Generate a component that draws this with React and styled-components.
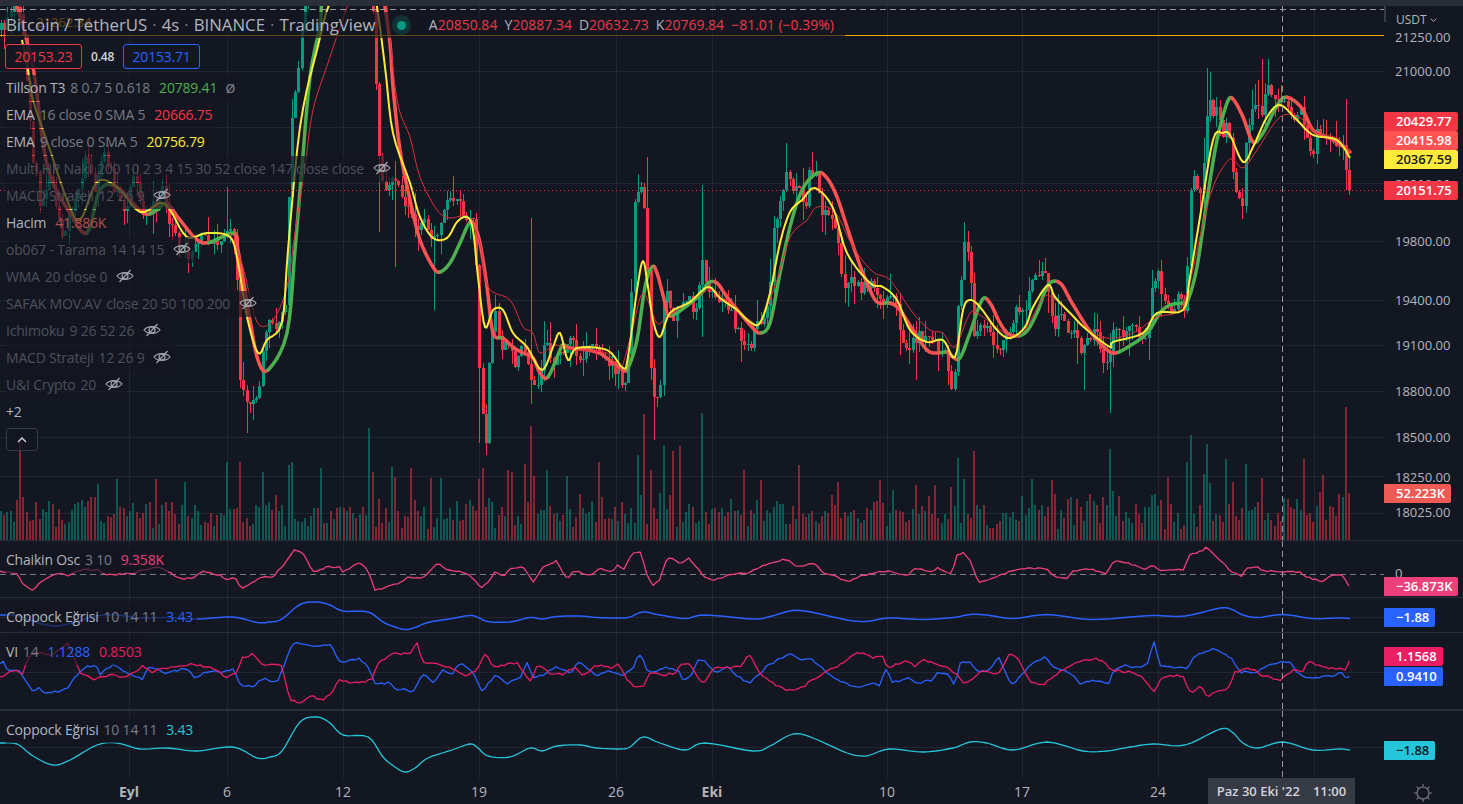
import React from 'react'
import styled, { createGlobalStyle } from 'styled-components'

const GlobalStyle = createGlobalStyle`
  html, body { margin: 0; padding: 0; background: #131722; overflow: hidden; }
  body { font-family: 'Open Sans', 'Noto Sans', sans-serif; }
`

const PLOT_W = 1384
const CROSS_X = 1282
const STEP = 3.233
const V_GRID = [129, 227, 343, 479, 616, 712, 887, 1022, 1158, 1314]
const TIME_LABELS = [
  ['Eyl', 129, true], ['6', 227], ['12', 343], ['19', 479], ['26', 616],
  ['Eki', 712, true], ['10', 887], ['17', 1022], ['24', 1158],
]

// closes read off the chart, page pixels
const CLOSES = [[0,30],[15,10],[22,20],[28,100],[33,160],[40,200],[50,180],[62,230],[72,215],[85,160],[95,190],[105,150],[115,190],[125,210],[135,175],[145,215],[155,205],[163,190],[170,225],[180,245],[190,255],[200,235],[215,245],[232,232],[236,250],[240,385],[247,400],[255,395],[260,385],[264,345],[270,320],[278,325],[285,310],[288,220],[292,120],[298,70],[302,30],[308,-20],[370,-20],[374,30],[376,90],[380,170],[385,190],[392,180],[400,195],[408,210],[415,225],[425,220],[432,245],[438,235],[446,205],[452,195],[460,205],[466,225],[472,210],[476,270],[480,395],[486,440],[490,345],[495,305],[500,345],[510,345],[515,365],[522,345],[530,375],[538,385],[545,340],[552,365],[560,355],[570,335],[578,365],[590,345],[600,355],[610,360],[618,375],[626,390],[630,330],[634,200],[642,180],[646,230],[649,345],[655,400],[660,390],[664,300],[669,290],[672,325],[680,305],[688,300],[695,315],[703,250],[707,290],[716,300],[725,305],[733,320],[742,340],[750,345],[756,325],[765,320],[770,280],[775,220],[782,195],[788,165],[793,185],[798,180],[805,210],[810,165],[818,185],[822,215],[830,215],[836,225],[841,275],[846,290],[852,280],[860,290],[870,285],[880,300],[888,295],[895,305],[905,350],[912,345],[920,335],[932,345],[945,350],[952,395],[956,370],[958,310],[964,240],[970,265],[974,330],[982,320],[990,335],[1000,350],[1005,340],[1012,325],[1017,300],[1023,320],[1029,290],[1036,278],[1044,265],[1050,300],[1055,325],[1060,315],[1068,330],[1075,330],[1082,352],[1090,340],[1095,330],[1100,350],[1108,368],[1112,335],[1120,335],[1130,325],[1140,335],[1147,335],[1152,290],[1158,275],[1162,300],[1170,310],[1178,295],[1184,315],[1188,250],[1192,175],[1197,190],[1201,200],[1204,165],[1208,95],[1213,120],[1218,105],[1223,135],[1228,125],[1232,170],[1238,195],[1242,200],[1246,145],[1252,115],[1258,105],[1263,115],[1267,85],[1272,100],[1278,95],[1284,100],[1290,120],[1295,120],[1302,110],[1305,130],[1312,155],[1318,130],[1322,140],[1330,145],[1337,140],[1342,140],[1347,175],[1349,190]]

const LONG_WICKS = [[247,433],[480,443],[378,232],[395,267],[433,310],[532,218],[655,440],[702,185],[702,337],[647,157],[786,143],[953,440],[1110,413],[1347,99],[1262,59],[1207,68],[1210,72],[1246,212],[227,187],[304,6],[548,330],[965,222],[970,300],[1046,258],[885,378],[915,380],[1085,390]]

const VOL_PEAKS = [[21,440],[80,486],[98,484],[118,479],[155,479],[185,482],[228,462],[240,462],[264,472],[288,465],[293,462],[300,472],[320,468],[370,428],[374,472],[391,467],[395,477],[410,468],[430,478],[440,478],[478,479],[484,468],[507,470],[512,472],[526,464],[530,426],[533,476],[546,470],[566,476],[600,462],[638,455],[645,414],[652,470],[662,447],[665,445],[672,451],[680,446],[702,413],[745,470],[760,480],[800,465],[838,482],[856,483],[880,480],[915,485],[935,485],[951,487],[957,458],[964,479],[974,451],[1032,479],[1051,480],[1071,497],[1090,494],[1110,449],[1113,491],[1168,477],[1187,462],[1190,435],[1203,474],[1207,444],[1210,483],[1226,459],[1233,482],[1245,464],[1262,478],[1299,490],[1303,459],[1320,492],[1323,475],[1343,497],[1346,407],[1349,493]]

const T3 = [[17,6],[33,67],[43,143],[52,180],[70,213],[87,233],[100,190],[117,187],[143,213],[157,210],[167,203],[180,220],[203,243],[233,233],[238,250],[250,320],[258,360],[268,370],[287,333],[295,250],[302,167],[310,77],[320,27],[328,-10],[380,-10],[385,7],[390,43],[393,87],[400,150],[410,200],[420,240],[433,267],[440,272],[450,263],[460,243],[468,225],[473,223],[480,243],[487,287],[493,333],[503,338],[513,347],[523,353],[533,358],[540,373],[548,377],[560,350],[563,345],[570,348],[597,352],[613,363],[623,370],[628,368],[637,340],[645,287],[652,267],[657,273],[665,303],[668,315],[677,313],[700,295],[708,283],[717,283],[727,297],[740,313],[752,327],[760,333],[770,323],[780,273],[790,227],[802,190],[817,173],[827,178],[837,197],[847,227],[857,257],[867,283],[877,302],[890,303],[900,310],[913,330],[927,350],[937,353],[947,352],[953,357],[960,358],[970,333],[982,300],[990,303],[1000,323],[1010,335],[1025,333],[1037,313],[1048,285],[1060,283],[1072,303],[1087,327],[1100,343],[1113,353],[1128,347],[1147,333],[1160,313],[1170,305],[1183,303],[1188,300],[1197,267],[1207,200],[1217,140],[1227,103],[1233,99],[1243,117],[1253,142],[1263,133],[1273,113],[1283,98],[1293,100],[1303,110],[1313,130],[1327,137],[1337,142],[1350,152]]

const EMA9 = [[22,40],[28,70],[33,100],[50,150],[67,200],[80,220],[97,182],[117,187],[140,212],[160,203],[170,210],[187,237],[207,233],[230,237],[238,263],[247,317],[258,353],[267,340],[282,322],[288,250],[300,127],[317,50],[335,-5],[372,-5],[377,7],[385,67],[393,133],[410,183],[420,217],[433,238],[447,238],[457,222],[467,217],[473,230],[478,277],[485,327],[493,310],[503,310],[513,333],[527,347],[542,370],[553,347],[560,333],[568,360],[577,348],[607,350],[623,368],[628,357],[637,290],[643,261],[648,287],[653,320],[660,337],[670,313],[690,302],[708,287],[720,298],[737,310],[750,322],[760,323],[770,293],[780,243],[790,212],[802,200],[815,188],[833,208],[847,253],[870,283],[883,287],[897,300],[910,330],[927,342],[943,340],[955,357],[963,310],[970,300],[980,307],[997,330],[1010,338],[1025,327],[1033,307],[1048,285],[1055,297],[1070,313],[1087,330],[1110,347],[1113,342],[1143,333],[1157,313],[1183,310],[1190,277],[1200,217],[1213,140],[1223,133],[1230,135],[1243,162],[1253,147],[1267,117],[1280,105],[1297,120],[1313,135],[1337,140],[1350,158]]

const EMA16 = [[230,233],[243,267],[257,322],[273,320],[287,287],[295,233],[305,167],[313,110],[330,57],[347,7],[355,-10],[383,-10],[387,7],[397,100],[410,137],[420,177],[437,210],[450,218],[467,217],[480,243],[488,287],[510,300],[523,327],[533,333],[540,353],[555,345],[573,350],[607,353],[620,370],[633,327],[643,293],[657,323],[667,317],[700,295],[713,290],[733,307],[750,320],[760,322],[777,280],[790,237],[807,220],[817,207],[835,212],[853,247],[873,272],[890,280],[913,313],[930,330],[943,333],[955,347],[970,313],[980,315],[1000,330],[1012,337],[1025,330],[1043,298],[1053,298],[1070,313],[1083,327],[1107,338],[1133,333],[1157,317],[1177,312],[1188,290],[1200,237],[1213,187],[1230,159],[1243,168],[1257,150],[1280,117],[1300,118],[1317,133],[1337,138],[1350,152]]

const CHAIKIN = [[0,572],[17,573],[22,583],[32,591],[40,583],[48,577],[62,573],[68,576],[80,570],[98,570],[107,575],[133,573],[157,566],[170,573],[182,579],[192,578],[203,571],[220,575],[227,580],[235,578],[242,589],[253,582],[263,577],[273,577],[283,565],[295,549],[303,553],[313,572],[327,567],[340,567],[343,572],[358,563],[367,568],[375,590],[388,587],[400,583],[408,577],[423,578],[438,563],[447,570],[467,573],[482,588],[490,580],[495,572],[505,576],[510,568],[523,567],[533,582],[543,567],[557,561],[567,580],[573,571],[592,575],[600,568],[613,572],[618,564],[623,570],[633,553],[640,551],[647,575],[653,585],[660,580],[667,557],[675,560],[680,564],[688,558],[698,568],[705,578],[715,580],[728,575],[747,573],[757,568],[767,564],[785,559],[797,566],[815,564],[823,573],[835,576],[847,582],[860,576],[870,574],[883,571],[893,572],[902,575],[908,576],[915,568],[930,572],[938,568],[952,574],[957,555],[963,552],[970,560],[978,582],[988,580],[1003,574],[1018,569],[1030,568],[1047,569],[1055,577],[1068,578],[1073,571],[1090,569],[1107,574],[1113,561],[1127,563],[1145,569],[1153,565],[1162,571],[1183,570],[1190,554],[1198,553],[1207,547],[1218,558],[1233,573],[1242,576],[1247,568],[1258,566],[1262,571],[1300,572],[1307,577],[1323,582],[1332,575],[1343,575],[1349,586]]

const COPPOCK = [[0,743],[17,744],[33,756],[53,765],[70,760],[97,745],[117,743],[140,749],[167,748],[197,751],[233,747],[257,758],[270,757],[282,751],[300,722],[317,717],[330,723],[343,735],[368,737],[383,757],[395,767],[405,772],[415,768],[428,758],[452,750],[470,744],[478,748],[488,756],[510,757],[530,748],[542,751],[557,746],[580,745],[597,748],[620,749],[630,747],[643,737],[660,743],[685,750],[705,743],[753,751],[770,746],[793,734],[813,738],[847,753],[863,756],[870,755],[890,749],[923,752],[953,748],[970,742],[987,743],[1013,750],[1047,742],[1083,751],[1107,751],[1130,747],[1153,744],[1185,745],[1220,729],[1232,732],[1243,743],[1258,748],[1283,742],[1313,750],[1340,749],[1350,750]]

const VI_PLUS = [[0,665],[3,662],[7,670],[20,672],[32,690],[40,688],[45,694],[60,691],[68,687],[75,677],[87,667],[98,666],[100,675],[113,664],[127,673],[142,679],[148,667],[167,673],[187,668],[195,678],[205,672],[220,672],[233,669],[240,685],[253,687],[263,678],[277,682],[283,667],[292,645],[300,643],[315,647],[330,644],[340,663],[358,658],[367,665],[375,683],[390,683],[395,690],[405,689],[413,693],[423,673],[433,682],[443,670],[452,675],[457,664],[463,664],[475,675],[482,692],[495,675],[508,683],[520,677],[527,662],[533,677],[543,675],[557,667],[572,673],[578,662],[597,675],[608,670],[623,675],[633,668],[638,655],[643,658],[648,673],[667,667],[680,672],[683,683],[692,673],[698,660],[705,662],[715,673],[728,667],[738,677],[750,683],[767,666],[787,655],[793,653],[800,660],[813,660],[828,673],[840,682],[857,687],[873,682],[880,685],[886,668],[893,683],[908,678],[917,683],[933,680],[938,673],[948,673],[955,687],[960,663],[970,663],[978,672],[990,670],[999,657],[1007,677],[1013,685],[1033,662],[1045,657],[1053,668],[1065,669],[1080,683],[1093,680],[1110,683],[1113,670],[1125,665],[1137,668],[1148,663],[1154,640],[1160,667],[1173,667],[1187,669],[1195,655],[1213,649],[1230,657],[1240,672],[1257,672],[1267,667],[1278,662],[1291,661],[1297,673],[1305,678],[1323,677],[1343,673],[1346,679],[1349,676]]

const VI_MINUS = [[0,678],[10,670],[20,672],[22,677],[28,658],[37,652],[53,655],[68,643],[80,673],[93,679],[110,675],[127,677],[143,666],[153,673],[163,668],[183,667],[190,664],[213,668],[227,678],[237,672],[242,658],[253,654],[263,665],[282,665],[290,700],[300,702],[312,696],[322,700],[332,693],[338,680],[353,683],[372,680],[377,663],[393,654],[410,653],[417,642],[423,663],[438,664],[443,666],[452,668],[467,677],[478,668],[486,653],[493,667],[517,663],[531,683],[537,665],[550,673],[562,675],[575,666],[583,675],[597,665],[613,668],[618,663],[623,673],[633,687],[643,687],[650,672],[663,675],[677,673],[680,664],[690,665],[703,685],[713,668],[730,668],[743,665],[748,653],[760,673],[775,685],[787,690],[803,687],[820,675],[843,663],[857,653],[865,652],[873,659],[883,655],[887,668],[907,661],[915,667],[923,660],[947,667],[957,675],[965,684],[980,672],[1000,673],[1010,652],[1018,660],[1032,683],[1043,685],[1062,670],[1077,662],[1097,658],[1113,670],[1127,672],[1140,675],[1155,692],[1162,677],[1183,675],[1191,695],[1200,685],[1207,696],[1228,688],[1235,672],[1250,668],[1262,675],[1280,681],[1292,670],[1303,672],[1307,661],[1323,667],[1345,670],[1349,661]]

// seeded so the picture is the same on each load
const makeRand = seed => () => {
  seed = (seed * 16807) % 2147483647
  return (seed - 1) / 2147483646
}

const lerp = (pts, x) => {
  if (x <= pts[0][0]) return pts[0][1]
  for (let i = 1; i < pts.length; i++) {
    if (x <= pts[i][0]) {
      const [x0, y0] = pts[i - 1]
      const [x1, y1] = pts[i]
      return y0 + ((x - x0) / (x1 - x0 || 1)) * (y1 - y0)
    }
  }
  return pts[pts.length - 1][1]
}

const toLine = pts => pts.map(([x, y]) => `${x},${y}`).join(' ')

// catmull-rom, sampled
const smooth = pts => {
  const out = []
  for (let i = 0; i < pts.length - 1; i++) {
    const p0 = pts[i - 1] || pts[i]
    const p1 = pts[i]
    const p2 = pts[i + 1]
    const p3 = pts[i + 2] || p2
    for (let k = 0; k < 5; k++) {
      const t = k / 5
      const f = j => 0.5 * (2 * p1[j] + (p2[j] - p0[j]) * t +
        (2 * p0[j] - 5 * p1[j] + 4 * p2[j] - p3[j]) * t * t +
        (3 * p1[j] - p0[j] - 3 * p2[j] + p3[j]) * t * t * t)
      out.push([+f(0).toFixed(1), +f(1).toFixed(1)])
    }
  }
  out.push(pts[pts.length - 1])
  return out
}

// one point per bar with a little jitter, oscillators are not that clean
const perBar = (pts, amount, seed) => {
  const rand = makeRand(seed)
  const out = []
  const end = pts[pts.length - 1][0]
  for (let x = pts[0][0]; x < end; x += STEP) {
    out.push([+x.toFixed(1), +(lerp(pts, x) + (rand() - 0.5) * amount).toFixed(1)])
  }
  out.push(pts[pts.length - 1])
  return out
}

const makeCandles = () => {
  const rand = makeRand(7331)
  const count = Math.floor(1349 / STEP) + 1
  const list = []
  let prev = lerp(CLOSES, 1349 - count * STEP)
  for (let i = 0; i < count; i++) {
    const x = Math.round(1349 - (count - 1 - i) * STEP)
    const last = i === count - 1
    const close = lerp(CLOSES, x) + (last ? 0 : (rand() - 0.5) * 13)
    const top = Math.min(prev, close)
    const bottom = Math.max(prev, close)
    let high = top - rand() * rand() * 28
    let low = bottom + rand() * rand() * 28
    LONG_WICKS.forEach(([wx, wy]) => {
      if (Math.abs(wx - x) < 2) {
        if (wy < top) high = Math.min(high, wy)
        if (wy > bottom) low = Math.max(low, wy)
      }
    })
    const up = close <= prev
    let volTop = 540 - (10 + rand() * 24 + rand() * rand() * 22)
    VOL_PEAKS.forEach(([vx, vy]) => {
      if (Math.abs(vx - x) < 2) volTop = vy
    })
    list.push({ x, top, bottom: Math.max(bottom, top + 1), high, low, up, volTop })
    prev = close
  }
  return list
}

const CANDLES = makeCandles()

const t3Segments = () => {
  const dense = smooth(T3)
  const segs = []
  let cur = { up: dense[1][1] < dense[0][1], pts: [dense[0]] }
  for (let i = 1; i < dense.length; i++) {
    const up = dense[i][1] < dense[i - 1][1]
    cur.pts.push(dense[i])
    if (up !== cur.up) {
      segs.push(cur)
      cur = { up, pts: [dense[i]] }
    }
  }
  segs.push(cur)
  return segs
}

const Page = styled.div`
  width: 1463px;
  height: 804px;
  display: flex;
  flex-direction: column;
  background: #131722;
  overflow: hidden;
  color: #b2b5be;
`

const TopStrip = styled.div`
  height: 6px;
  flex: none;
  background: #2a2e39;
`

const PaneRow = styled.section`
  box-sizing: border-box;
  flex: none;
  height: ${props => props.$height}px;
  display: grid;
  grid-template-columns: ${PLOT_W}px 79px;
  border-bottom: ${props => props.$edge ?? 1}px solid #2a2e39;
`

const Plot = styled.div`
  position: relative;
  overflow: hidden;
  width: ${PLOT_W}px;
  height: ${props => props.$height}px;

  svg { display: block; }
`

const PriceAxis = styled.div`
  position: relative;
  overflow: hidden;
  font-size: 13px;
`

const AxisText = styled.span`
  position: absolute;
  left: 11px;
  top: ${props => props.$y}px;
  transform: translateY(-50%);
  color: #b2b5be;
  line-height: 16px;
  white-space: nowrap;
`

const AxisEdge = styled.i`
  position: absolute;
  left: 0;
  top: 0;
  width: 2px;
  height: 16px;
  background: #363a45;
`

const Currency = styled(AxisText)`
  left: 12px;
  font-size: 12px;
  display: flex;
  align-items: center;
  gap: 3px;
`

const Tag = styled.span`
  position: absolute;
  left: 0;
  top: ${props => props.$y}px;
  height: 19px;
  line-height: 19px;
  padding: 0 6px 0 12px;
  background: ${props => props.$bg};
  color: ${props => props.$ink || '#fff'};
  font-weight: 600;
  border-radius: 0 2px 2px 0;
  white-space: nowrap;
`

const TimeAxis = styled.footer`
  position: relative;
  flex: none;
  height: 26px;
  font-size: 14px;
`

const TimeText = styled.span`
  position: absolute;
  left: ${props => props.$x}px;
  top: 4px;
  transform: translateX(-50%);
  color: #b2b5be;
  font-weight: ${props => (props.$bold ? 700 : 400)};
  line-height: 20px;
`

const CrossLabel = styled.div`
  position: absolute;
  left: 1208px;
  top: 0;
  width: 147px;
  height: 26px;
  background: #363a45;
  color: #d1d4dc;
  font-size: 13px;
  font-weight: 600;
  display: flex;
  align-items: center;
  justify-content: center;
  gap: 13px;
  white-space: nowrap;
`

const GearBox = styled.div`
  position: absolute;
  left: 1413px;
  top: 5px;
  width: 20px;
  height: 20px;
`

const Legend = styled.div`
  position: absolute;
  left: 6px;
  top: ${props => props.$top}px;
  display: flex;
  flex-direction: column;
  align-items: flex-start;
  gap: 1px;
  font-size: 14px;
  letter-spacing: -0.2px;
`

const Row = styled.div`
  box-sizing: border-box;
  display: flex;
  align-items: center;
  gap: 5px;
  height: 26px;
  padding: 0 4px 2px 0;
  white-space: nowrap;
  background: rgba(19, 23, 34, 0.66);
`

const Name = styled.span`
  color: ${props => (props.$dim ? '#4c505c' : '#b2b5be')};
`

const Args = styled.span`
  color: ${props => (props.$dim ? '#4c505c' : '#787b86')};
`

const Value = styled.span`
  margin-left: 4px;
  color: ${props => props.$color};
`

const NoValue = styled.span`
  margin-left: 3px;
  font-size: 17px;
  line-height: 20px;
  color: #787b86;
`

const Eye = styled.span`
  display: flex;
  margin-left: 4px;
`

const TitleRow = styled(Row)`
  width: 839px;
  margin-bottom: 5px;
  font-size: 16.8px;
  letter-spacing: 0;
  gap: 0;
`

const TitleDot = styled.span`
  margin: 0 5px;
  color: #787b86;
`

const Status = styled.span`
  width: 20px;
  height: 20px;
  margin: 2px 18px 0 17px;
  border-radius: 50%;
  background: rgba(8, 153, 129, 0.22);
  display: flex;
  align-items: center;
  justify-content: center;

  &::after {
    content: '';
    width: 9px;
    height: 9px;
    border-radius: 50%;
    background: #089981;
  }
`

const Ohlc = styled.span`
  font-size: 14px;
  margin-right: 7px;
  color: #b2b5be;

  b {
    font-weight: 400;
    color: #f23645;
  }
`

const QuoteRow = styled.div`
  display: flex;
  align-items: center;
  height: 25px;
  margin: 0 0 5px -1px;
  font-size: 14px;
`

const QuoteBox = styled.span`
  box-sizing: border-box;
  width: 77px;
  height: 25px;
  line-height: 23px;
  text-align: center;
  background: rgba(19, 23, 34, 0.9);
  border: 1px solid ${props => props.$color};
  border-radius: 3px;
  color: ${props => props.$color};
  margin-left: ${props => props.$gap || 0}px;
`

const Spread = styled.span`
  margin-left: 9px;
  font-size: 12px;
  font-weight: 600;
  color: #d1d4dc;
`

const More = styled(Row)`
  color: #b2b5be;
  background: none;
`

const Collapse = styled.button`
  box-sizing: border-box;
  width: 32px;
  height: 23px;
  margin-top: 2px;
  padding: 0;
  display: flex;
  align-items: center;
  justify-content: center;
  color: #d1d4dc;
  background: rgba(19, 23, 34, 0.8);
  border: 1px solid #363a45;
  border-radius: 3px;
`

const EyeOff = () => (
  <Eye>
    <svg width="18" height="14" viewBox="0 0 18 14" fill="none" stroke="#a3a6af" strokeWidth="1.2">
      <path d="M1 7C4.5 2.5 13.5 2.5 17 7C13.5 11.5 4.5 11.5 1 7Z" />
      <circle cx="9" cy="7" r="3" />
      <path d="M3.5 13L14.5 1" />
    </svg>
  </Eye>
)

const Chevron = ({ size, up }) => (
  <svg width={size} height={size * 0.6} viewBox="0 0 10 6" fill="none" stroke="currentColor" strokeWidth="1.4">
    <path d={up ? 'M1 5L5 1L9 5' : 'M1 1L5 5L9 1'} />
  </svg>
)

const Gear = () => (
  <svg width="20" height="20" viewBox="0 0 20 20" fill="none" stroke="#787b86" strokeWidth="1.2">
    <circle cx="10" cy="10" r="6" />
    <path d="M10 1V4M10 16V19M1 10H4M16 10H19M3.6 3.6L5.8 5.8M14.2 14.2L16.4 16.4M3.6 16.4L5.8 14.2M14.2 5.8L16.4 3.6" />
  </svg>
)

// one pane drawing, viewBox in page pixels so lines can be given as read
const PaneSvg = ({ top, height, lines, children }) => (
  <svg width={PLOT_W} height={height} viewBox={`0 ${top} ${PLOT_W} ${height}`}>
    <g strokeWidth="1" shapeRendering="crispEdges">
      {lines.map(y => <line key={y} x1="0" x2={PLOT_W} y1={y + 0.5} y2={y + 0.5} stroke="#222632" />)}
      {V_GRID.map(x => <line key={x} x1={x + 0.5} x2={x + 0.5} y1={top} y2={top + height} stroke="#222632" />)}
    </g>
    {children}
    <line
      x1={CROSS_X + 0.5}
      x2={CROSS_X + 0.5}
      y1={top}
      y2={top + height}
      stroke="#9598a1"
      strokeDasharray="6 4"
      shapeRendering="crispEdges"
    />
  </svg>
)

const Curve = ({ pts, color, width }) => (
  <polyline points={toLine(pts)} fill="none" stroke={color} strokeWidth={width || 1.3} strokeLinejoin="round" />
)

const MainDrawing = () => (
  <PaneSvg top={6} height={534} lines={[71, 127, 183, 241, 300, 345, 391, 437, 476, 513]}>
    <g shapeRendering="crispEdges">
      {CANDLES.map(c => (
        <rect
          key={c.x}
          x={c.x - 1}
          y={c.volTop}
          width="2"
          height={540 - c.volTop}
          fill={c.up ? '#089981' : '#f23645'}
          fillOpacity="0.5"
        />
      ))}
      {CANDLES.map(c => (
        <g key={c.x} fill={c.up ? '#089981' : '#f23645'}>
          <rect x={c.x} y={c.high} width="1" height={c.low - c.high} />
          <rect x={c.x - 1} y={c.top} width="3" height={c.bottom - c.top} />
        </g>
      ))}
    </g>
    {t3Segments().map((s, i) => (
      <polyline
        key={i}
        points={toLine(s.pts)}
        fill="none"
        stroke={s.up ? '#4caf50' : '#ff5252'}
        strokeWidth="3.5"
        strokeLinecap="round"
        strokeLinejoin="round"
      />
    ))}
    <polyline points={toLine(smooth(EMA16))} fill="none" stroke="#d5303e" strokeWidth="1" />
    <polyline points={toLine(smooth(EMA9))} fill="none" stroke="#ffeb3b" strokeWidth="2" strokeLinejoin="round" />
    <text x="36" y="27" fill="#f7a600" fontSize="13" fontFamily="Open Sans, sans-serif">21262.34</text>
    <line x1="0" x2={PLOT_W} y1="35.5" y2="35.5" stroke="#f7a600" shapeRendering="crispEdges" />
    <line x1="0" x2={PLOT_W} y1="190.5" y2="190.5" stroke="#f23645" strokeDasharray="1 3" shapeRendering="crispEdges" />
    <line x1="0" x2={PLOT_W} y1="9.5" y2="9.5" stroke="#9598a1" strokeDasharray="6 4" shapeRendering="crispEdges" />
  </PaneSvg>
)

const MainLegend = () => (
  <Legend $top={6}>
    <TitleRow>
      Bitcoin / TetherUS<TitleDot>·</TitleDot>4s<TitleDot>·</TitleDot>BINANCE<TitleDot>·</TitleDot>TradingView
      <Status />
      <Ohlc>A<b>20850.84</b></Ohlc>
      <Ohlc>Y<b>20887.34</b></Ohlc>
      <Ohlc>D<b>20632.73</b></Ohlc>
      <Ohlc>K<b>20769.84</b></Ohlc>
      <Ohlc><b>−81.01 (−0.39%)</b></Ohlc>
    </TitleRow>
    <QuoteRow>
      <QuoteBox $color="#f23645">20153.23</QuoteBox>
      <Spread>0.48</Spread>
      <QuoteBox $color="#2962ff" $gap={9}>20153.71</QuoteBox>
    </QuoteRow>
    <Row><Name>Tillson T3</Name><Args>8 0.7 5 0.618</Args><Value $color="#4caf50">20789.41</Value><NoValue>ø</NoValue></Row>
    <Row><Name>EMA</Name><Args>16 close 0 SMA 5</Args><Value $color="#f23645">20666.75</Value></Row>
    <Row><Name>EMA</Name><Args>9 close 0 SMA 5</Args><Value $color="#ffeb3b">20756.79</Value></Row>
    <Row><Name $dim>Multi HP Naki</Name><Args $dim>200 10 2 3 4 15 30 52 close 147 close close</Args><EyeOff /></Row>
    <Row><Name $dim>MACD Strateji</Name><Args $dim>12 26 9</Args><EyeOff /></Row>
    <Row><Name>Hacim</Name><Value $color="#b5504c">41.886K</Value></Row>
    <Row><Name $dim>ob067 - Tarama</Name><Args $dim>14 14 15</Args><EyeOff /></Row>
    <Row><Name $dim>WMA</Name><Args $dim>20 close 0</Args><EyeOff /></Row>
    <Row><Name $dim>SAFAK MOV.AV</Name><Args $dim>close 20 50 100 200</Args><EyeOff /></Row>
    <Row><Name $dim>Ichimoku</Name><Args $dim>9 26 52 26</Args><EyeOff /></Row>
    <Row><Name $dim>MACD Strateji</Name><Args $dim>12 26 9</Args><EyeOff /></Row>
    <Row><Name $dim>U&amp;I Crypto</Name><Args $dim>20</Args><EyeOff /></Row>
    <More>+2</More>
    <Collapse><Chevron size={10} up /></Collapse>
  </Legend>
)

const Study = ({ name, args, values }) => (
  <Legend $top={6}>
    <Row>
      <Name>{name}</Name>
      <Args>{args}</Args>
      {values.map(([text, color]) => <Value key={text} $color={color}>{text}</Value>)}
    </Row>
  </Legend>
)

const Pane = ({ height, edge = 1, svg, legend, axis }) => (
  <PaneRow $height={height + edge} $edge={edge}>
    <Plot $height={height}>
      {svg}
      {legend}
    </Plot>
    <PriceAxis>{axis}</PriceAxis>
  </PaneRow>
)

const App = () => {
  const coppock = smooth(COPPOCK)
  const blueCoppock = coppock.map(([x, y]) => [x, 617 + (y - 747) * 0.5])
  return (
    <Page>
      <GlobalStyle />
      <TopStrip />
      <Pane
        height={534}
        svg={<MainDrawing />}
        legend={<MainLegend />}
        axis={
          <>
            <AxisEdge />
            <Currency $y={14}>USDT <Chevron size={7} /></Currency>
            {[['21250.00', 31], ['21000.00', 65], ['20200.00', 178], ['19800.00', 235], ['19400.00', 294], ['19100.00', 339], ['18800.00', 385], ['18500.00', 431], ['18250.00', 471], ['18025.00', 506]].map(([t, y]) => (
              <AxisText key={t} $y={y}>{t}</AxisText>
            ))}
            <Tag $y={106} $bg="#f23645">20429.77</Tag>
            <Tag $y={125} $bg="#ff5252">20415.98</Tag>
            <Tag $y={144} $bg="#ffeb3b" $ink="#131722">20367.59</Tag>
            <Tag $y={175} $bg="#f23645">20151.75</Tag>
            <Tag $y={478} $bg="#ee5b55">52.223K</Tag>
          </>
        }
      />
      <Pane
        height={56}
        svg={
          <PaneSvg top={541} height={56} lines={[]}>
            <line x1="0" x2={PLOT_W} y1="574.5" y2="574.5" stroke="#787b86" strokeDasharray="6 4" shapeRendering="crispEdges" />
            <Curve pts={perBar(CHAIKIN, 1.6, 11)} color="#ec407a" />
          </PaneSvg>
        }
        legend={<Study name="Chaikin Osc" args="3 10" values={[['9.358K', '#ec407a']]} />}
        axis={
          <>
            <AxisText $y={32}>0</AxisText>
            <Tag $y={36} $bg="#ec407a">−36.873K</Tag>
          </>
        }
      />
      <Pane
        height={34}
        svg={
          <PaneSvg top={598} height={34} lines={[617]}>
            <Curve pts={blueCoppock} color="#2962ff" width={1.5} />
          </PaneSvg>
        }
        legend={<Study name="Coppock Eğrisi" args="10 14 11" values={[['3.43', '#2962ff']]} />}
        axis={<Tag $y={10} $bg="#2962ff">−1.88</Tag>}
      />
      <Pane
        height={76}
        edge={2}
        svg={
          <PaneSvg top={633} height={76} lines={[672]}>
            <Curve pts={perBar(VI_PLUS, 2.4, 23)} color="#2962ff" />
            <Curve pts={perBar(VI_MINUS, 2.4, 37)} color="#e91e63" />
          </PaneSvg>
        }
        legend={<Study name="VI" args="14" values={[['1.1288', '#2962ff'], ['0.8503', '#e91e63']]} />}
        axis={
          <>
            <Tag $y={14} $bg="#e91e63">1.1568</Tag>
            <Tag $y={34} $bg="#2962ff">0.9410</Tag>
          </>
        }
      />
      <Pane
        height={67}
        edge={0}
        svg={
          <PaneSvg top={711} height={67} lines={[747]}>
            <Curve pts={coppock} color="#26c6da" />
          </PaneSvg>
        }
        legend={<Study name="Coppock Eğrisi" args="10 14 11" values={[['3.43', '#26c6da']]} />}
        axis={<Tag $y={30} $bg="#26c6da" $ink="#131722">−1.88</Tag>}
      />
      <TimeAxis>
        {TIME_LABELS.map(([text, x, bold]) => <TimeText key={text} $x={x} $bold={bold}>{text}</TimeText>)}
        <CrossLabel><span>Paz 30 Eki '22</span><span>11:00</span></CrossLabel>
        <GearBox><Gear /></GearBox>
      </TimeAxis>
    </Page>
  )
}

export default App
